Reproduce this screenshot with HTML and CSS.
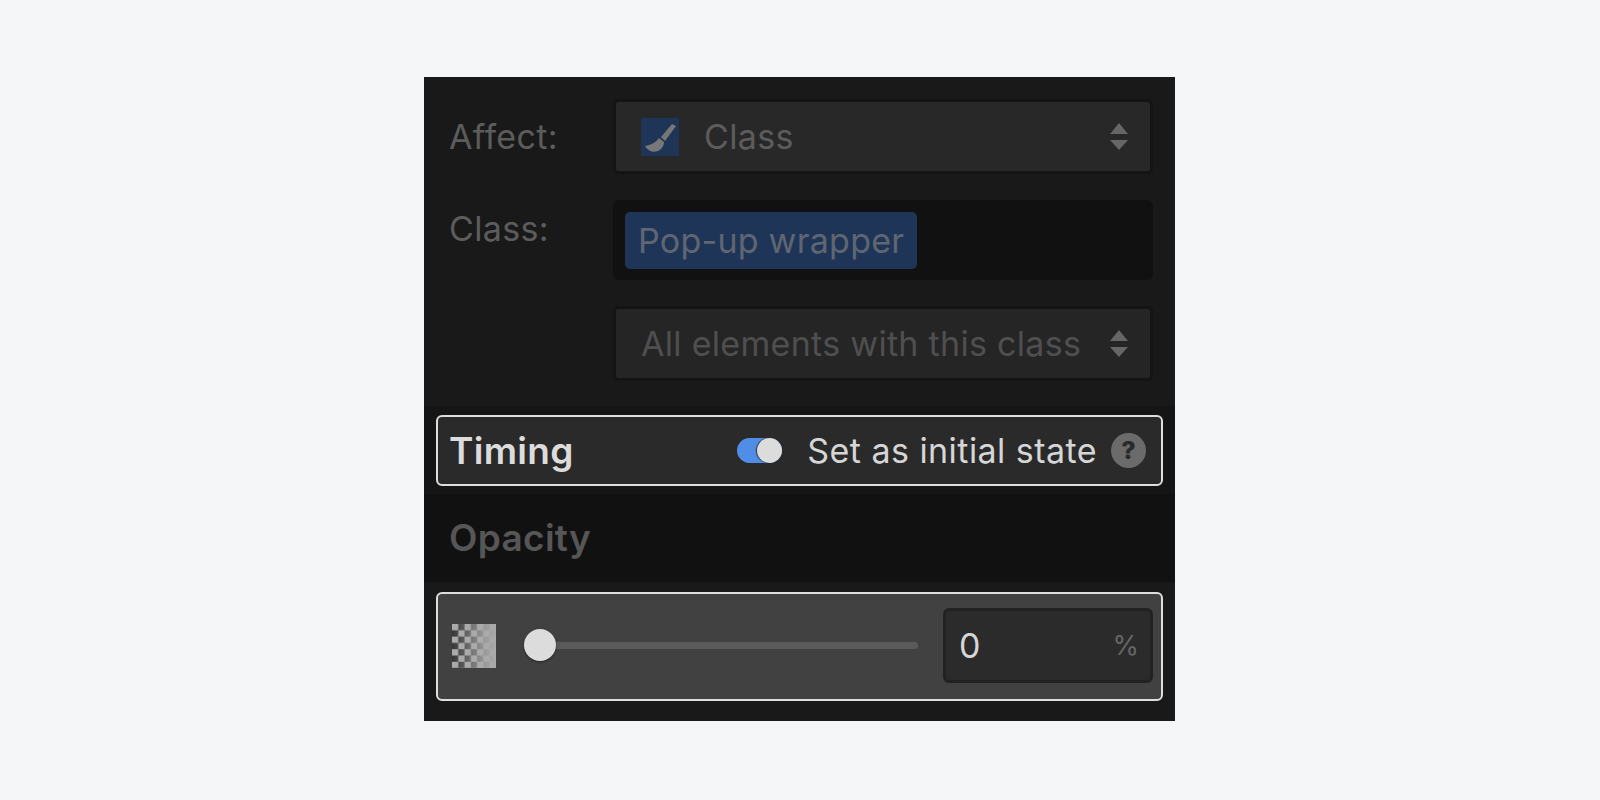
FILE: index.html
```html
<!DOCTYPE html>
<html lang="en">
<head>
  <meta charset="UTF-8">
  <title>Timing settings</title>
  <link rel="stylesheet" href="styles.css">
</head>
<body>

<div class="panel">
  <div class="targets">
    <div class="row">
      <div class="label">Affect:</div>
      <div class="select">
        <svg class="brush" viewBox="0 0 38 38">
          <rect width="38" height="38" fill="#1f3557"/>
          <path d="M35 8 L31 6 L20 19 L24 23 Z" fill="#777"/>
          <path d="M18 20 C14 25 10 27 4 28 C7 33 12 35 17 33 C21 31 23 27 23 24 Z" fill="#777"/>
        </svg>
        <span class="select-text">Class</span>
        <svg class="arrows" viewBox="0 0 18 27">
          <path d="M9 0 L18 11 L0 11 Z M0 17 L18 17 L9 27 Z" fill="#666"/>
        </svg>
      </div>
    </div>
    <div class="row">
      <div class="label label-class">Class:</div>
      <div class="class-field">
        <span class="chip">Pop-up wrapper</span>
      </div>
    </div>
    <div class="row">
      <div class="label"></div>
      <div class="select select-scope">
        <span class="scope-text">All elements with this class</span>
        <svg class="arrows" viewBox="0 0 18 27">
          <path d="M9 0 L18 11 L0 11 Z M0 17 L18 17 L9 27 Z" fill="#666"/>
        </svg>
      </div>
    </div>
  </div>

  <div class="timing-band">
    <div class="timing-box">
      <div class="timing-title">Timing</div>
      <div class="toggle"><span class="toggle-knob"></span></div>
      <div class="initial-text">Set as initial state</div>
      <div class="help">?</div>
    </div>
  </div>

  <div class="opacity-head">Opacity</div>

  <div class="opacity-band">
    <div class="opacity-box">
      <svg class="checker" viewBox="0 0 44 44">
        <defs>
          <pattern id="cells" width="12.6" height="12.6" patternUnits="userSpaceOnUse">
            <rect width="12.6" height="12.6" fill="#353535"/>
            <rect width="6.3" height="6.3" fill="#aaa"/>
            <rect x="6.3" y="6.3" width="6.3" height="6.3" fill="#aaa"/>
          </pattern>
          <linearGradient id="fade">
            <stop offset="0" stop-color="#aaa" stop-opacity="0"/>
            <stop offset="0.72" stop-color="#aaa" stop-opacity="0.85"/>
            <stop offset="1" stop-color="#aaa"/>
          </linearGradient>
        </defs>
        <rect width="44" height="44" fill="url(#cells)"/>
        <rect width="44" height="44" fill="url(#fade)"/>
      </svg>
      <div class="slider"><span class="slider-knob"></span></div>
      <div class="number-field">
        <span class="number">0</span>
        <span class="unit">%</span>
      </div>
    </div>
  </div>
</div>

</body>
</html>
```

FILE: styles.css
```css
body {
  margin: 0;
  height: 800px;
  background: #f5f6f8;
  font-family: Inter, sans-serif;
  overflow: hidden;
}

.panel {
  width: 751px;
  height: 644px;
  margin: 77px 0 0 424px;
  background: #191919;
  display: flex;
  flex-direction: column;
}

.targets {
  padding: 22px 22px 25px 25px;
  display: flex;
  flex-direction: column;
  gap: 26px;
}

.row {
  display: flex;
}

.label {
  width: 164px;
  font-size: 34px;
  letter-spacing: 0.35px;
  color: #5c5c5c;
  line-height: 75px;
}

.label-class {
  line-height: 58px;
}

.select {
  flex: 1;
  height: 69px;
  background: #282828;
  border: 3px solid #141414;
  border-radius: 5px;
  display: flex;
  align-items: center;
  padding: 0 22px 0 25px;
}

.select-scope {
  background: #252525;
}

.brush {
  width: 38px;
  height: 38px;
  margin-right: 25px;
}

.select-text {
  flex: 1;
  font-size: 34px;
  letter-spacing: 0.35px;
  color: #5c5c5c;
}

.scope-text {
  flex: 1;
  font-size: 34px;
  letter-spacing: 0.3px;
  color: #4f4f4f;
}

.arrows {
  width: 18px;
  height: 27px;
}

.class-field {
  flex: 1;
  height: 80px;
  box-sizing: border-box;
  background: #111;
  border-radius: 6px;
  padding: 12px;
}

.chip {
  display: inline-block;
  height: 57px;
  line-height: 58px;
  padding: 0 13px;
  background: #1f3557;
  border-radius: 5px;
  font-size: 34px;
  letter-spacing: 0.25px;
  color: #5f6672;
}

.timing-band {
  height: 88px;
  background: #151515;
  padding: 9px 12px 0;
  box-sizing: border-box;
}

.timing-box {
  height: 71px;
  box-sizing: border-box;
  background: #2a2a2a;
  border: 2px solid #dedede;
  border-radius: 6px;
  display: flex;
  align-items: center;
  padding: 0 15px 0 11px;
}

.timing-title {
  flex: 1;
  font-size: 37px;
  font-weight: 600;
  letter-spacing: 0.3px;
  color: #dcdcdc;
}

.toggle {
  position: relative;
  width: 45px;
  height: 25px;
  border-radius: 13px;
  background: #4f8de6;
  margin-right: 25px;
}

.toggle-knob {
  position: absolute;
  top: 0;
  right: 0;
  width: 25px;
  height: 25px;
  border-radius: 50%;
  background: #dcdcdc;
  box-shadow: -1px 0 1px #333;
}

.initial-text {
  font-size: 34px;
  letter-spacing: 0.45px;
  color: #d6d6d6;
  margin-right: 14px;
}

.help {
  width: 35px;
  height: 35px;
  border-radius: 50%;
  background: #6b6b6b;
  color: #2a2a2a;
  font-size: 25px;
  font-weight: 800;
  line-height: 35px;
  text-align: center;
}

.opacity-head {
  height: 88px;
  box-sizing: border-box;
  background: #111;
  padding-left: 25px;
  font-size: 37px;
  font-weight: 600;
  letter-spacing: 0.3px;
  color: #565656;
  line-height: 88px;
}

.opacity-band {
  flex: 1;
  padding: 10px 12px 0;
}

.opacity-box {
  height: 109px;
  box-sizing: border-box;
  background: #414141;
  border: 2px solid #dedede;
  border-radius: 6px;
  display: flex;
  align-items: center;
  padding: 0 8px 2px 14px;
}

.checker {
  width: 44px;
  height: 44px;
  margin-right: 28px;
}

.slider {
  position: relative;
  flex: 1;
  height: 7px;
  background: #5a5a5a;
  border-radius: 4px;
  margin-right: 25px;
}

.slider-knob {
  position: absolute;
  left: 0;
  top: -13px;
  width: 32px;
  height: 32px;
  border-radius: 50%;
  background: #dcdcdc;
  box-shadow: 0 1px 2px #222;
}

.number-field {
  width: 210px;
  height: 75px;
  box-sizing: border-box;
  background: #2b2b2b;
  border: 3px solid #222;
  border-radius: 6px;
  display: flex;
  align-items: center;
  justify-content: space-between;
  padding: 0 13px 0 13px;
}

.number {
  font-size: 34px;
  color: #d6d6d6;
}

.unit {
  font-size: 27px;
  margin-right: -2px;
  color: #666;
}
```
